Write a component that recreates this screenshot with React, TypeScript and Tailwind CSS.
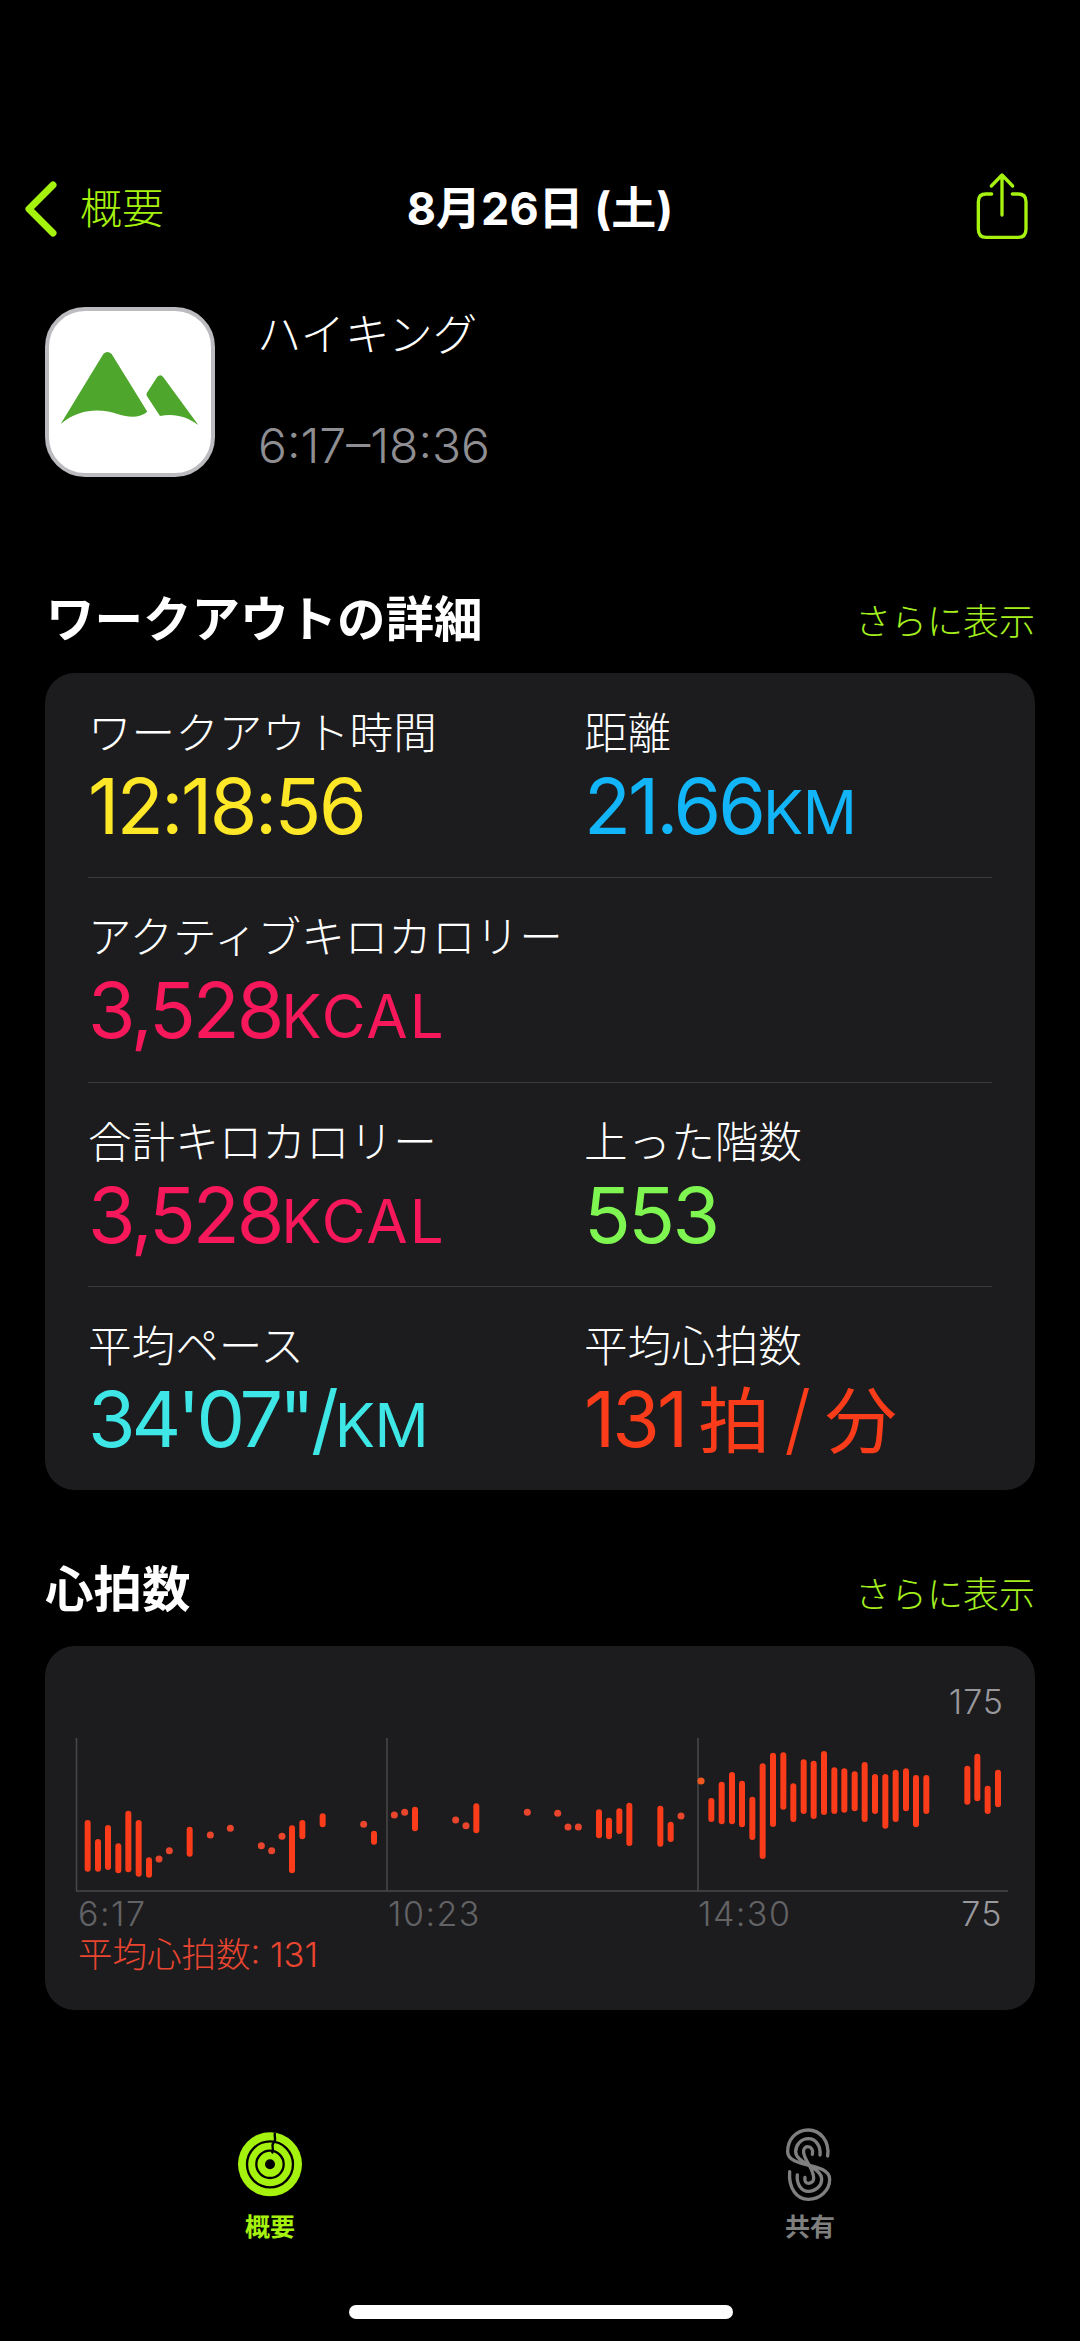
import React from "react";

// chart samples, in px relative to the svg's own box
type Bar = [number, number, number];

const BARS_LEFT: Bar[] = [
  [143, 540, 695], [174, 597, 695], [204, 555, 690], [235, 610, 700], [265, 512, 697], [296, 540, 710],
  [327, 652, 713], [449, 560, 650], [756, 556, 700], [787, 540, 598], [848, 520, 562], [1002, 572, 614],
  [1125, 500, 574], [1309, 490, 580],
];
const DOTS_LEFT = [
  [357, 657], [388, 632], [511, 585], [571, 565], [664, 617], [695, 632], [726, 589], [971, 553],
  [1063, 525], [1094, 517], [1247, 540], [1278, 557], [1462, 517],
];
const BARS_RIGHT: Bar[] = [
  [177, 508, 595], [207, 533, 598], [238, 505, 582], [268, 488, 618], [361, 497, 620], [392, 545, 606],
  [514, 474, 546], [545, 425, 553], [576, 396, 553], [606, 422, 562], [637, 470, 600], [668, 370, 657],
  [699, 338, 561], [730, 337, 509], [760, 430, 546], [791, 358, 522], [821, 362, 537], [852, 333, 525],
  [883, 382, 522], [913, 385, 518], [944, 394, 514], [974, 366, 546], [1005, 402, 522], [1036, 402, 566],
  [1067, 389, 546], [1098, 385, 514], [1128, 405, 562], [1159, 405, 522], [1282, 377, 494], [1312, 341, 484],
  [1343, 437, 522], [1374, 389, 502],
];
const DOTS_RIGHT = [[53, 520], [84, 561], [115, 561], [423, 528]];

function toLeft(x: number) {
  return (40 + x / 3) - 70;
}
function toRight(x: number) {
  return (540 + x / 3) - 70;
}
function toY(y: number) {
  return y / 3 - 90;
}

function HeartChart() {
  const bars = [
    ...BARS_LEFT.map(([x, a, b]) => [toLeft(x), toY(a), toY(b)]),
    ...BARS_RIGHT.map(([x, a, b]) => [toRight(x), toY(a), toY(b)]),
  ];
  const dots = [
    ...DOTS_LEFT.map(([x, y]) => [toLeft(x), toY(y)]),
    ...DOTS_RIGHT.map(([x, y]) => [toRight(x), toY(y)]),
  ];
  return (
    <svg width="942" height="163" viewBox="0 0 942 163" className="block ml-[25px]">
      <path d="M6.5 8V161 M317 8V161 M628 8V161 M6 161H938" stroke="#48484a" strokeWidth="1.5" fill="none" />
      {bars.map(([x, a, b], i) => (
        <line key={i} x1={x} x2={x} y1={a + 3} y2={b - 3} stroke="#fa3c1a" strokeWidth="6" strokeLinecap="round" />
      ))}
      {dots.map(([x, y], i) => (
        <circle key={i} cx={x} cy={y} r="3.5" fill="#e8452c" />
      ))}
      <circle cx={toRight(483)} cy={toY(423)} r="3.6" fill="#f0581f" />
    </svg>
  );
}

function Metric({ label, children }: { label: string; children: React.ReactNode }) {
  return (
    <div className="flex flex-col">
      <div className="text-[43.6px] leading-[50px] font-light text-white whitespace-nowrap">{label}</div>
      <div className="mt-[7px] h-[80px] leading-[80px] text-[77px] whitespace-nowrap">{children}</div>
    </div>
  );
}

function MetricRow({ children, border }: { children: React.ReactNode; border?: boolean }) {
  return (
    <div className={border ? "h-[204.5px] mx-[43px] pt-[35px] border-t border-[#3a3a3c]" : "h-[204px] mx-[43px] pt-[36px]"}>
      <div className="grid grid-cols-[496px_1fr]">{children}</div>
    </div>
  );
}

function Unit({ children, wide }: { children: React.ReactNode; wide?: boolean }) {
  return <span className={wide ? "text-[60px] tracking-[2px]" : "text-[60px] tracking-[-0.5px]"}>{children}</span>;
}

function SectionHeader({ title, wide }: { title: string; wide?: boolean }) {
  return (
    <div className={wide ? "flex items-center justify-between h-[70px] pl-[46px] pr-[45px]" : "flex items-center justify-between h-[70px] pl-[45px] pr-[45px]"}>
      <h2 className="text-[48.5px] font-bold text-white leading-none">{title}</h2>
      <span className={wide ? "text-[36px] font-light text-[#a4f01e] leading-none mt-[3px]" : "text-[36px] font-light text-[#a4f01e] leading-none mt-[9px]"}>さらに表示</span>
    </div>
  );
}

function ActivityIcon() {
  return (
    <svg width="90" height="90" viewBox="0 0 270 270" className="block">
      <circle cx="135" cy="133" r="96" fill="#a6f20f" />
      <circle cx="135" cy="133" r="69" fill="none" stroke="#000" strokeWidth="7" />
      <circle cx="135" cy="133" r="41" fill="none" stroke="#000" strokeWidth="7" />
      <circle cx="135" cy="133" r="15" fill="#000" />
      <path d="M150 38C146 52 156 58 146 68C136 78 150 86 141 100" fill="none" stroke="#000" strokeWidth="7" />
    </svg>
  );
}

function SharingIcon() {
  return (
    <svg width="90" height="90" viewBox="0 0 270 270" className="block" fill="none" stroke="#7f7f7f" strokeWidth="10" strokeLinecap="round">
      <path d="M188 108C194 62 165 30 130 30C92 30 68 60 68 95C68 145 194 125 194 178C194 212 165 238 130 238C95 238 70 205 74 155" />
      <path d="M165 105C168 78 152 56 130 56C108 56 92 75 92 95C92 130 170 140 170 178C170 198 152 214 130 214C108 214 94 190 97 165" />
      <path d="M142 103C146 90 138 80 128 80C120 80 114 88 116 98C120 125 146 145 146 175C146 183 140 190 130 190C122 190 118 183 120 172" />
    </svg>
  );
}

export default function App() {
  return (
    <div className="relative h-[2341px] w-[1080px] overflow-hidden bg-black font-['Inter','Noto_Sans_CJK_JP',sans-serif]">
      {/* nav */}
      <div className="grid grid-cols-[1fr_auto_1fr] items-center h-[90px] mt-[165px] pt-0">
        <div className="flex items-center pl-[22px]">
          <svg width="40" height="60" viewBox="0 0 40 60" fill="none" stroke="#a6f20f" strokeWidth="7" strokeLinecap="round" strokeLinejoin="round">
            <path d="M31 5L7 29L31 53" />
          </svg>
          <span className="ml-[18px] -mt-[3px] text-[42px] font-light text-[#a6f20f]">概要</span>
        </div>
        <div className="text-[45px] font-bold text-white -mt-[2px]">8月26日 (土)</div>
        <div className="flex justify-end pr-[30px]">
          <svg width="90" height="90" viewBox="0 0 270 270" fill="none" stroke="#a6f20f" strokeWidth="10" strokeLinecap="round" strokeLinejoin="round" className="-mt-[10px]">
            <path d="M95 102H78Q55 102 55 125V207Q55 232 78 232H175Q198 232 198 207V125Q198 102 175 102H157" />
            <path d="M126 165V46M94 78L126 45L158 78" />
          </svg>
        </div>
      </div>

      {/* workout header */}
      <div className="flex ml-[45px] mt-[52px] h-[170px]">
        <div className="w-[170px] h-[170px] rounded-[40px] bg-white border-[4px] border-[#bcbcc0] shrink-0">
          <svg viewBox="27 33 486 486" className="block w-full h-full">
            <path d="M62 372L190 162Q202 150 215 162L322 335C300 355 265 352 235 343C190 328 125 320 62 372Z" fill="#4fa62c" />
            <path d="M320 280L352 230Q362 220 370 232L475 375C440 350 405 340 360 348L322 290Q318 285 320 280Z" fill="#4fa62c" />
          </svg>
        </div>
        <div className="ml-[42px] flex flex-col">
          <div className="text-[44.5px] leading-[50px] font-light text-white mt-[3px]">ハイキング</div>
          <div className="text-[48px] leading-[56px] font-light text-[#8e8e93] mt-[58px] ml-[1px]">6:17–18:36</div>
        </div>
      </div>

      {/* details */}
      <div className="mt-[108px]">
        <SectionHeader title="ワークアウトの詳細" wide />
      </div>
      <div className="mx-[45px] mt-[18px] h-[817px] rounded-[30px] bg-[#1c1c1e]">
        <MetricRow>
          <Metric label="ワークアウト時間">
            <span className="text-[#fde726] tracking-[-2.5px]">12:18:56</span>
          </Metric>
          <Metric label="距離">
            <span className="text-[#12b5f7] tracking-[-3px]">21.66<Unit>KM</Unit></span>
          </Metric>
        </MetricRow>
        <MetricRow border>
          <Metric label="アクティブキロカロリー">
            <span className="text-[#f7175b] tracking-[-3px]">3,528<Unit wide>KCAL</Unit></span>
          </Metric>
        </MetricRow>
        <MetricRow border>
          <Metric label="合計キロカロリー">
            <span className="text-[#f7175b] tracking-[-3px]">3,528<Unit wide>KCAL</Unit></span>
          </Metric>
          <Metric label="上った階数">
            <span className="text-[#7ff551] tracking-[-2.5px]">553</span>
          </Metric>
        </MetricRow>
        <MetricRow border>
          <Metric label="平均ペース">
            <span className="text-[#3ee6e6] tracking-[-4px]">34'07"/<Unit>KM</Unit></span>
          </Metric>
          <Metric label="平均心拍数">
            <span className="text-[#fa3c1a] tracking-[-3px]">
              131
              <span className="ml-[13px] text-[72px] tracking-normal">拍</span>
              <span className="ml-[14px] font-light tracking-normal">/</span>
              <span className="ml-[14px] text-[72px] tracking-normal">分</span>
            </span>
          </Metric>
        </MetricRow>
      </div>

      {/* heart rate */}
      <div className="mt-[65px]">
        <SectionHeader title="心拍数" />
      </div>
      <div className="mx-[45px] mt-[21px] h-[364px] rounded-[30px] bg-[#1c1c1e] overflow-hidden">
        <div className="h-[84px] pt-[36px] pr-[31px] text-right text-[34px] leading-[40px] font-light tracking-[1px] text-[#98989d]">175</div>
        <HeartChart />
        <div className="flex ml-[33px] mr-[32px] mt-[1px] text-[34px] leading-[40px] font-light tracking-[1.5px] text-[#636366]">
          <span className="w-[310px]">6:17</span>
          <span className="w-[310px]">10:23</span>
          <span className="flex-1">14:30</span>
          <span className="text-[#98989d]">75</span>
        </div>
        <div className="ml-[33px] mt-[1px] text-[34.5px] leading-[40px] font-light text-[#ea4530]">平均心拍数: 131</div>
      </div>

      {/* tab bar */}
      <div className="grid grid-cols-2 mt-[110px]">
        <div className="flex flex-col items-center">
          <ActivityIcon />
          <span className="text-[25px] leading-[30px] font-bold text-[#a6f20f] mt-[2px]">概要</span>
        </div>
        <div className="flex flex-col items-center">
          <SharingIcon />
          <span className="text-[25px] leading-[30px] font-bold text-[#7f7f7f] mt-[2px]">共有</span>
        </div>
      </div>
      <div className="absolute left-[349px] top-[2305px] w-[384px] h-[14px] rounded-full bg-white" />
    </div>
  );
}
